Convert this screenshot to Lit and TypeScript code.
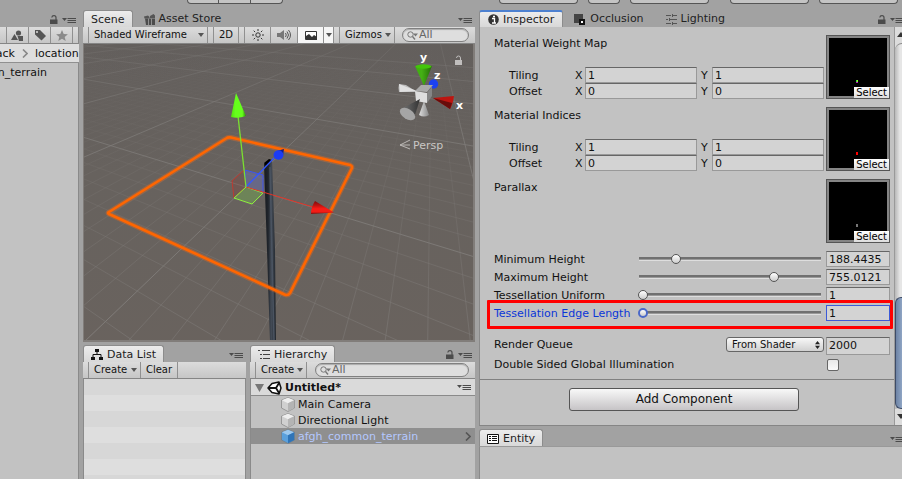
import { LitElement, html, svg, css, nothing } from "lit";
import { customElement, property } from "lit/decorators.js";

const caret = html`<svg class="caret" width="6" height="4" viewBox="0 0 6 4"><path d="M0 0h6L3 4z" fill="#555" /></svg>`;
const lockIcon = html`<svg width="8" height="9" viewBox="0 0 8 9"><path d="M0 4.500h7.500V9H0z" fill="#4b4b4b" /><path d="M1.800 2.500Q2 .6 4 .6 6 .6 6 2.600V5" fill="none" stroke="#4b4b4b" stroke-width="1.200" /></svg>`;
const menuIcon = html`<svg width="14" height="7" viewBox="0 0 14 7"><path d="M0 1h5L2.500 4z" fill="#4b4b4b" /><path d="M5.500 1.500H14M5.500 3.500H14M5.500 5.500H14" stroke="#4b4b4b" /></svg>`;
const magnifier = html`<svg width="11" height="9" viewBox="0 0 11 9"><circle cx="3.500" cy="3.500" r="2.700" fill="none" stroke="#777" /><path d="M5.500 5.500L8 8.500" stroke="#777" stroke-width="1.400" /><path d="M6 2.500h5L8.500 5.500z" fill="#777" /></svg>`;

const cube = (top: string, left: string, right: string) => html`<svg width="14" height="15" viewBox="0 0 14 15">
  <path d="M7 .5L13.500 3.200V11L7 14.500.5 11V3.200z" fill="${left}" stroke="#777" stroke-width=".6" />
  <path d="M7 .7L13.200 3.300 7 6.200.8 3.300z" fill="${top}" /><path d="M7 6.200L13.200 3.300V10.900L7 14.200z" fill="${right}" />
</svg>`;

/* Ground plane projected through two vanishing points. */
const ORIGIN = [246, 187];
const VP_X = [-349, 5];
const VP_Z = [432, 9];

function gridLine(k: number, step: number, along: number[], through: number[]) {
  const w = 1 + k * step;
  const px = (ORIGIN[0] + k * step * along[0]) / w;
  const py = (ORIGIN[1] + k * step * along[1]) / w;
  const x2 = through[0] + (px - through[0]) * 12;
  const y2 = through[1] + (py - through[1]) * 12;
  return svg`<line x1=${through[0]} y1=${through[1]} x2=${x2} y2=${y2} stroke=${k % 10 === 0 ? "url(#major)" : "url(#minor)"} />`;
}

const range = (from: number, to: number) => Array.from({ length: to - from + 1 }, (_, i) => from + i);

@customElement("scene-view")
export class SceneView extends LitElement {
  static styles = css`
    :host { display: block; flex: 1; min-height: 0; border: 2px solid #817d7a; border-width: 0 2px 2px 1px; box-sizing: border-box; overflow: hidden; }
    svg { display: block; width: 100%; height: 100%; }
    .axis { font: bold 11px "DejaVu Sans", sans-serif; fill: #fff; }
    .persp { font: 11px "DejaVu Sans", sans-serif; fill: #c9c7c5; }
  `;

  render() {
    return html`<svg viewBox="84 44 389 296" preserveAspectRatio="xMidYMid slice">
      <defs>
        <linearGradient id="bg" x1="0" y1="0" x2="0" y2="1">
          <stop offset="0" stop-color="#625e5c" /><stop offset=".35" stop-color="#67625e" /><stop offset="1" stop-color="#6b635e" />
        </linearGradient>
        <linearGradient id="minor" gradientUnits="userSpaceOnUse" x1="0" y1="44" x2="0" y2="340">
          <stop offset="0" stop-color="#777" stop-opacity="0" /><stop offset=".2" stop-color="#7c7875" stop-opacity=".08" /><stop offset=".5" stop-color="#7c7875" stop-opacity=".3" /><stop offset="1" stop-color="#7c7875" stop-opacity=".65" />
        </linearGradient>
        <linearGradient id="major" gradientUnits="userSpaceOnUse" x1="0" y1="44" x2="0" y2="340">
          <stop offset="0" stop-color="#7a7775" stop-opacity=".3" /><stop offset=".3" stop-color="#7d7a77" stop-opacity=".8" /><stop offset="1" stop-color="#807c79" />
        </linearGradient>
        <linearGradient id="pole" x1="0" y1="0" x2="1" y2="0">
          <stop offset="0" stop-color="#171a1f" /><stop offset=".35" stop-color="#20252c" /><stop offset=".6" stop-color="#444c57" /><stop offset="1" stop-color="#20252c" />
        </linearGradient>
        <linearGradient id="greenCone"><stop offset="0" stop-color="#3fb010" /><stop offset=".4" stop-color="#44b014" /><stop offset="1" stop-color="#256c08" /></linearGradient>
        <linearGradient id="limeCone"><stop offset="0" stop-color="#54e010" /><stop offset=".3" stop-color="#66ff1c" /><stop offset=".75" stop-color="#66ff1c" /><stop offset="1" stop-color="#2a8c08" /></linearGradient>
        <linearGradient id="redCone" x1="0" y1="0" x2="0" y2="1"><stop offset="0" stop-color="#7c0c0c" /><stop offset=".35" stop-color="#c01410" /><stop offset=".6" stop-color="#fa1c16" /><stop offset=".85" stop-color="#f01c16" /><stop offset="1" stop-color="#700c0a" /></linearGradient>
        <linearGradient id="darkCone"><stop offset="0" stop-color="#777" /><stop offset="1" stop-color="#333" /></linearGradient>
        <linearGradient id="lightCone"><stop offset="0" stop-color="#ddd" /><stop offset="1" stop-color="#888" /></linearGradient>
      </defs>
      <rect x="0" y="0" width="600" height="500" fill="url(#bg)" />
      <g>
        ${range(-30, 60).map((k) => gridLine(k, 0.0294, VP_X, VP_Z))}
        ${range(-13, 40).map((k) => gridLine(k, 0.0615, VP_Z, VP_X))}
      </g>
      <path d="M264 164L272 160 275 250 276 341H270L267 250z" fill="url(#pole)" />
      <path d="M264 163l5-4 3 1-6 6z" fill="#000" />
      <path d="M270 167L274 341" stroke="#4a5360" stroke-width="1.500" />
      <path d="M109 212L226 138.500Q228 137 231 137.500L350 165Q353 166 351.500 169L290 293Q288 296 284.500 294.500L109 214Q107 213 109 212z" fill="none" stroke="#ff6a10" stroke-opacity=".35" stroke-width="5" />
      <path d="M109 212L226 138.500Q228 137 231 137.500L350 165Q353 166 351.500 169L290 293Q288 296 284.500 294.500L109 214Q107 213 109 212z" fill="none" stroke="#ff6600" stroke-width="2.600" />
      <path d="M246 187L244 170 232 181 234 198z" fill="#8a3a35" fill-opacity=".25" stroke="#c03a30" />
      <path d="M246 187L245 170 263 175 263 193z" fill="#6a70b8" fill-opacity=".45" stroke="#3c55f0" />
      <path d="M246 187L263 193 252 204 234 198z" fill="#78b850" fill-opacity=".4" stroke="#8cf03c" />
      <path d="M246 187L274 158" stroke="#3456ff" stroke-width="1.300" />
      <path d="M246 187L313 207" stroke="#e03428" />
      <path d="M246 187L238 116" stroke="#7be030" stroke-width="1.300" />
      <path d="M236 93L231 117Q238 119 246 116z" fill="url(#limeCone)" />
      <path d="M334 212.500L315 201Q311 207 311 214z" fill="url(#redCone)" />
      <path d="M277 151l7-2-1 6z" fill="#101c88" /><ellipse cx="278.500" cy="155" rx="5" ry="4.700" fill="#1c3cf4" />
      <path d="M399 84Q398 88 399 92L417 92 406 85z" fill="#bbb" /><path d="M399 84L417 91 400 92z" fill="#e0e0e0" />
      <path d="M424 101L419 115Q424 118 429 115z" fill="url(#lightCone)" />
      <path d="M415 66L424 86 432 66z" fill="url(#greenCone)" /><ellipse cx="423.500" cy="66.500" rx="8" ry="2.200" fill="#43c50a" />
      <path d="M428 90l3-7 7 2z" fill="#122488" /><circle cx="433.500" cy="84" r="4.700" fill="#1b41f2" />
      <path d="M415 91L421 85H433L427 92z" fill="#aaa" /><path d="M415 91L427 93V103L416 101z" fill="#dedede" /><path d="M427 93L432 86V96L427 103z" fill="#858585" />
      <path d="M420 99L401 109Q405 117 414 118z" fill="url(#darkCone)" /><ellipse cx="407.500" cy="114" rx="8.500" ry="5" transform="rotate(32 407.500 114)" fill="#a5a5a5" />
      <path d="M433 98L454 96Q453 104 450 109z" fill="#bd1510" /><path d="M433 98L450 109 452 103z" fill="#680c0a" />
      <text class="axis" x="420" y="61">y</text><text class="axis" x="434" y="79">z</text><text class="axis" x="456" y="109">x</text>
      <path d="M455 60h7v5h-7z" fill="#c0bebd" /><path d="M456.500 58a2 2 0 0 1 4 0v2" fill="none" stroke="#c0bebd" />
      <path d="M410 140L400 145 410 149M400 145H410" fill="none" stroke="#bbb8b5" />
      <text class="persp" x="413" y="149">Persp</text>
    </svg>`;
  }
}

@customElement("texture-slot")
export class TextureSlot extends LitElement {
  @property() label = "";
  @property() dot = "";
  @property({ type: Boolean }) tiled = false;

  static styles = css`
    :host { display: grid; grid-template-columns: minmax(0, 1fr) 64px; gap: 2px; height: 64px; }
    .info { display: flex; flex-direction: column; justify-content: space-between; }
    .name { line-height: 18px; }
    .vectors { padding-left: 15px; }
    .vector { display: grid; grid-template-columns: 66px 10px minmax(0, 1fr) 15px minmax(0, 1fr); height: 16px; line-height: 18px; }
    .second { padding-left: 4px; }
    input { box-sizing: border-box; width: 100%; min-width: 0; height: 16px; margin: 0; padding: 1px 2px 0; font: inherit; line-height: 14px; color: #111; background: #d3d3d3; border: 1px solid #999; border-top-color: #666; border-radius: 0; outline: 0; }
    .thumb { display: flex; align-items: flex-end; justify-content: flex-end; box-sizing: border-box; border: 1px solid #555; background: #000; box-shadow: inset 0 0 0 2px #858585; position: relative; }
    .dot { position: absolute; left: 29px; bottom: 15px; width: 2px; height: 3px; }
    .green { background: linear-gradient(90deg, #30e040 50%, #a0f020 50%); border-bottom: 1px solid #b020c0; height: 2px; }
    .red { background: #f00; }
    .grey { background: #777; }
    button { font: 10px/11px "DejaVu Sans", sans-serif; height: 11px; margin: 0; padding: 0 2px; border: 0; color: #000; background: linear-gradient(#fff, #ddd); position: relative; }
  `;

  render() {
    const row = (name: string, v: string) => html`<div class="vector">
      <span>${name}</span><span>X</span><input aria-label="${this.label} ${name} X" .value=${v} />
      <span class="second">Y</span><input aria-label="${this.label} ${name} Y" .value=${v} />
    </div>`;
    return html`<div class="info">
        <div class="name">${this.label}</div>
        ${this.tiled ? html`<div class="vectors">${row("Tiling", "1")}${row("Offset", "0")}</div>` : nothing}
      </div>
      <div class="thumb"><span class="dot ${this.dot}"></span><button>Select</button></div>`;
  }
}

@customElement("app-root")
export class AppRoot extends LitElement {
  static styles = css`
    :host { display: flex; flex-direction: column; min-height: 100vh; overflow: hidden; background: #a2a2a2; color: #111; font: 11px/16px "DejaVu Sans", sans-serif; }
    * { box-sizing: border-box; }
    svg { display: block; flex: none; }
    button, input, select { font: inherit; color: inherit; margin: 0; outline: 0; }
    .top { display: flex; height: 10px; align-items: flex-start; }
    .tool { display: flex; height: 4px; width: 79px; padding: 0; border: 1px solid #555; border-top: 0; border-radius: 0 0 4px 4px; background: #c4c4c4; }
    .play { width: 32px; border-radius: 0; border-left-width: 0; }
    .play.first { border-radius: 0 0 0 4px; border-left-width: 1px; }
    .play.last { border-radius: 0 0 4px 0; }
    .transport { display: flex; margin-left: 187px; }
    .services { display: flex; gap: 10px; margin-left: 216px; }
    .tool.small { width: 32px; }
    .divider { width: 1px; }
    .layout { flex: 1; display: grid; grid-template-columns: 79px minmax(0, 392fr) minmax(0, 423fr); column-gap: 4px; }
    .col { display: flex; flex-direction: column; min-width: 0; }
    .tabs { display: flex; align-items: flex-end; height: 17px; flex: none; }
    .tab { display: flex; align-items: center; gap: 4px; height: 17px; padding: 1px 11px 0; border: 0; background: none; color: #222; line-height: 16px; white-space: nowrap; }
    .tab.on { background: linear-gradient(#ececec, #d8d8d8); border: 1px solid #8c8c8c; border-bottom: 0; border-radius: 3px 3px 0 0; padding: 1px 7px 0; }
    .tab.focus { border-top: 2px solid #4c80d0; padding: 0 8px; }
    .tools { display: flex; align-items: flex-end; gap: 4px; margin-left: auto; padding: 0 3px 3px 0; }
    .edge { margin-right: -5px; }
    .bar { display: flex; align-items: center; height: 17px; flex: none; background: linear-gradient(#dcdcdc, #c6c6c6); border-bottom: 1px solid #858585; font-size: 10px; line-height: 16px; }
    .cell { display: flex; align-items: center; justify-content: center; height: 16px; padding: 0; border: 0; border-left: 1px solid #909090; background: none; white-space: nowrap; }
    .cell.end { border-right: 1px solid #909090; }
    .cell.lit { background: #f6f6f6; }
    .cell.drop { justify-content: space-between; padding: 0 3px 0 5px; }
    .cell.wide { padding: 0 4px; }
    .search { display: flex; align-items: center; gap: 1px; height: 14px; padding: 0 4px; border: 1px solid #808080; border-radius: 7px; background: #dedede; box-shadow: inset 0 1px 1px #aaa; }
    .search input { width: 100%; min-width: 0; height: 12px; padding: 0; border: 0; background: none; color: #666; font-size: 11px; }
    .search input::placeholder { color: #666; opacity: 1; }
    .body { flex: 1; background: #c2c2c2; border-left: 1px solid #8a8a8a; }

    .project .body { border-left: 0; border-right: 1px solid #8a8a8a; }
    .icons { justify-content: flex-end; border-right: 1px solid #8a8a8a; }
    .icons .cell { width: 22px; }
    .icons .tail { width: 6px; }
    .crumbs { display: flex; align-items: center; gap: 7px; height: 19px; padding-top: 1px; background: #dedede; border-bottom: 1px solid #909090; overflow: hidden; }
    .clip { display: flex; justify-content: flex-end; overflow: hidden; white-space: nowrap; }
    .parent { width: 15px; }
    .file { width: 47px; padding-top: 2px; }

    .w-shade { width: 120px; margin-left: 5px; }
    .w-2d { width: 26px; margin-left: 5px; }
    .w-icon { width: 27px; }
    .w-fx { width: 26px; }
    .w-fxdrop { width: 11px; }
    .w-giz { width: 56px; margin-left: 5px; }
    .w-search { width: 67px; margin: 0 6px 0 auto; }
    .w-create { width: 52px; }
    .w-clear { width: 38px; }
    .lower { display: grid; grid-template-columns: minmax(0, 163fr) minmax(0, 225fr); column-gap: 4px; height: 134px; margin-top: 3px; }
    .stripes { background: repeating-linear-gradient(#d7d7d7 0 16px, #dedede 16px 32px); border-right: 1px solid #8a8a8a; }
    .w-pad { width: 5px; }
    .w-wide { flex: 1; margin: 0 6px 0 8px; }
    .tree { margin: 0; padding: 0; list-style: none; }
    .tree li { display: flex; align-items: center; gap: 3px; height: 16px; padding: 1px 4px 0 30px; }
    .tree .scene { height: 17px; background: #dadada; border-bottom: 1px solid #8a8a8a; font-weight: bold; padding-left: 4px; }
    .tree .sel { background: #8f8f8f; color: #b4c8ff; }
    .push { margin-left: auto; }

    .inspector { display: flex; flex: none; height: 399px; background: #c2c2c2; border-left: 1px solid #8a8a8a; border-bottom: 1px solid #858585; }
    .content { flex: 1; min-width: 0; padding: 8px 4px 0 14px; }
    .slots { display: grid; row-gap: 8px; }
    .sliders { display: grid; row-gap: 2px; padding-top: 8px; }
    .slide { position: relative; display: grid; grid-template-columns: 144px minmax(0, 1fr) 64px; column-gap: 4px; align-items: center; height: 16px; white-space: nowrap; }
    .slide label { height: 16px; line-height: 18px; }
    .slide > input[type="range"] { margin-left: -4px; }
    .field { width: 100%; min-width: 0; height: 16px; padding: 1px 2px 0; line-height: 14px; background: #d3d3d3; border: 1px solid #999; border-top-color: #666; border-radius: 0; }
    .hot { color: #0a36d8; }
    .hot .field { border: 1px solid #3c5ad8; color: #111; }
    .marker { position: absolute; inset: -5px -3px -8px -7px; border: 3px solid #f00; border-radius: 1px; pointer-events: none; }
    input[type="range"] { appearance: none; -webkit-appearance: none; height: 12px; width: calc(100% + 4px); background: linear-gradient(#707070 0 2px, #999 2px 3px, #dedede 3px 4px) center / calc(100% - 2px) 4px no-repeat; }
    input[type="range"]::-webkit-slider-thumb { appearance: none; -webkit-appearance: none; width: 10px; height: 10px; border: 1px solid #555; border-radius: 50%; background: linear-gradient(#fff, #ccc); }
    .hot input[type="range"]::-webkit-slider-thumb { border: 2px solid #4a68c8; }
    .queue { display: grid; grid-template-columns: minmax(0, 1fr) 98px 64px; column-gap: 2px; height: 18px; margin-top: 16px; align-items: start; }
    .queue .field { height: 18px; padding: 0 2px 1px; }
    .pick { position: relative; }
    select { appearance: none; -webkit-appearance: none; display: block; width: 100%; height: 15px; padding: 0 5px; border: 1px solid #666; border-radius: 3px; background: linear-gradient(#f8f8f8, #d0d0d0); font-size: 10px; line-height: 13px; }
    .pick svg { position: absolute; right: 4px; top: 4px; pointer-events: none; }
    .double { display: flex; justify-content: space-between; align-items: center; height: 16px; margin-top: 2px; padding-right: 51px; }
    input[type="checkbox"] { appearance: none; -webkit-appearance: none; width: 12px; height: 12px; border: 1px solid #666; border-radius: 2px; background: linear-gradient(#e8e8e8, #fafafa); }
    .rule { height: 1px; margin: 6px -4px 8px -14px; background: #808080; }
    .add { display: block; width: 230px; height: 23px; margin: 0 auto; border: 1px solid #555; border-radius: 3px; background: linear-gradient(#f8f8f8, #c6c4c6); font-size: 12px; padding: 0 0 2px; }
    .addrow { padding-right: 16px; }
    .scroll { display: flex; flex-direction: column; width: 8px; border-left: 1px solid #999; background: #dcdcdc; overflow: hidden; }
    .scroll .arrow { height: 16px; padding: 5px 0 0 2px; }
    .groove { flex: 1; display: flex; align-items: flex-end; background: linear-gradient(90deg, #b8b8b8, #e6e6e6 5px); border-top: 1px solid #888; border-radius: 8px 0 0 0; }
    .grip { width: 7px; height: 112px; border: 1px solid #3d4b66; border-right: 0; border-radius: 6px 0 0 6px; background: linear-gradient(90deg, #6d83a5, #8fa5c4); }
    .entity { margin-top: 3px; }
    .entitybody { border-top: 1px solid #999; }
  `;

  private slide(id: string, label: string, value: string, pos: number, hot = false) {
    return html`<div class="slide ${hot ? "hot" : ""}">
      <label for=${id}>${label}</label>
      <input type="range" id=${id} min="0" max="1000" step="0.0001" .value=${String(pos)} />
      <input class="field" aria-label="${label} value" .value=${value} />
      ${hot ? html`<span class="marker"></span>` : nothing}
    </div>`;
  }

  render() {
    return html`
      <header class="top">
        <div class="transport">
          <button class="tool play first" aria-label="Play"></button><button class="tool play" aria-label="Pause"></button><button class="tool play last" aria-label="Step"></button>
        </div>
        <div class="services">
          <button class="tool" aria-label="Collab"></button><button class="tool small" aria-label="Cloud"></button><button class="tool" aria-label="Account"></button>
          <span class="divider"></span><button class="tool" aria-label="Layers"></button><button class="tool" aria-label="Layout"></button>
        </div>
      </header>
      <main class="layout">
        <section class="col project">
          <div class="tabs"><div class="tools">${lockIcon}${menuIcon}</div></div>
          <div class="bar icons">
            <button class="cell" aria-label="Filter by type"><svg width="13" height="11" viewBox="0 0 13 11"><path d="M3.500 4L7 10H0z" fill="#555" /><circle cx="7.500" cy="3" r="2.600" fill="#555" /><path d="M6.500 6H12v5H8z" fill="#555" /></svg></button>
            <button class="cell" aria-label="Filter by label"><svg width="12" height="12" viewBox="0 0 12 12"><path d="M1 1h5l6 6-4.500 4.500L1 5.500z" fill="#555" /><circle cx="3" cy="3" r="1" fill="#ddd" /></svg></button>
            <button class="cell" aria-label="Favourites"><svg width="12" height="11" viewBox="0 0 12 11"><path d="M6 0l1.700 3.900 4.200.3-3.200 2.700 1 4.100L6 8.800 2.300 11l1-4.100L.1 4.200l4.200-.3z" fill="#8a8a8a" /></svg></button>
            <span class="cell tail"></span>
          </div>
          <div class="crumbs"><span class="clip parent">ack</span><svg width="6" height="9" viewBox="0 0 6 9"><path d="M1 .5l4 4-4 4" fill="none" stroke="#888" stroke-width="1.600" /></svg><span>location</span></div>
          <div class="body"><div class="clip file">n_terrain</div></div>
        </section>

        <section class="col">
          <div class="tabs">
            <button class="tab on">Scene</button>
            <button class="tab"><svg width="11" height="11" viewBox="0 0 11 11"><path d="M1 4.500h10V11H2z" fill="#4c4c4c" /><path d="M0 2.500l4-1 1.500 1.500V4.500H.5zM6 2l3.500-2L11 1.500V4H6z" fill="#555" /><path d="M4.500 4.500V11M7.500 4.500V11" stroke="#909090" /></svg>Asset Store</button>
            <div class="tools">${menuIcon}</div>
          </div>
          <div class="bar">
            <button class="cell end drop w-shade">Shaded Wireframe${caret}</button>
            <button class="cell end w-2d">2D</button>
            <button class="cell w-2d" aria-label="Lighting"><svg width="12" height="12" viewBox="0 0 12 12"><circle cx="6" cy="6" r="2.200" fill="none" stroke="#333" /><path d="M6 0v2M6 10v2M0 6h2M10 6h2M1.700 1.700l1.400 1.400M8.900 8.900l1.400 1.400M10.300 1.700L8.900 3.100M3.100 8.900l-1.400 1.400" stroke="#333" /></svg></button>
            <button class="cell w-icon" aria-label="Audio"><svg width="14" height="12" viewBox="0 0 14 12"><path d="M0 4h3l4-3v10L3 8H0z" fill="#777" /><path d="M8.500 4q1.500 2 0 4M10 2.500q3 3.500 0 7M11.500 1q4 5 0 10" fill="none" stroke="#555" /></svg></button>
            <button class="cell lit w-fx" aria-label="Effects"><svg width="12" height="9" viewBox="0 0 12 9"><path d="M.5.5h11v8H.5z" fill="#fff" stroke="#333" /><path d="M1 5l3-2 3 3 2-2 3 2v3H1z" fill="#333" /></svg></button>
            <button class="cell lit end w-fxdrop" aria-label="Effects menu">${caret}</button>
            <button class="cell end drop w-giz">Gizmos${caret}</button>
            <label class="search w-search">${magnifier}<input aria-label="Search scene" placeholder="All" /></label>
          </div>
          <scene-view></scene-view>
          <div class="lower">
            <section class="col">
              <div class="tabs">
                <button class="tab on"><svg width="12" height="11" viewBox="0 0 12 11"><path d="M4 0h4v3H4zM0 8h4v3H0zM8 8h4v3H8z" fill="#111" /><path d="M6 3v3M2 8V5.500h8V8" fill="none" stroke="#111" /></svg>Data List</button>
                <div class="tools">${menuIcon}</div>
              </div>
              <div class="bar"><span class="w-pad"></span><button class="cell drop w-create">Create${caret}</button><button class="cell end w-clear">Clear</button></div>
              <div class="body stripes"></div>
            </section>
            <section class="col">
              <div class="tabs">
                <button class="tab on"><svg width="12" height="9" viewBox="0 0 12 9"><path d="M0 .5h2M4 .5h8M2 4.500h2M5 4.500h7M2 8.500h2M5 8.500h7" stroke="#444" /></svg>Hierarchy</button>
                <div class="tools">${lockIcon}${menuIcon}</div>
              </div>
              <div class="bar"><span class="w-pad"></span><button class="cell end drop w-create">Create${caret}</button><label class="search w-wide">${magnifier}<input aria-label="Search hierarchy" placeholder="All" /></label></div>
              <div class="body">
                <ul class="tree">
                  <li class="scene"><svg width="9" height="8" viewBox="0 0 9 8"><path d="M0 0h9L4.500 8z" fill="#777" /></svg><svg width="15" height="14" viewBox="0 0 15 14"><path d="M1 7L5 2.500 12 1l2 6-2 6-7-1.500z" fill="#fff" stroke="#111" stroke-width="1.500" stroke-linejoin="round" /><path d="M2 7h7M9 7l3-5M9 7l3 5" stroke="#111" stroke-width="1.800" /></svg><span>Untitled*</span><span class="push">${menuIcon}</span></li>
                  <li>${cube("#eee", "#d0d0d0", "#b4b4b4")}Main Camera</li>
                  <li>${cube("#eee", "#d0d0d0", "#b4b4b4")}Directional Light</li>
                  <li class="sel">${cube("#9cc8ee", "#5aa0dc", "#2f74b8")}afgh_common_terrain<svg class="push" width="6" height="9" viewBox="0 0 6 9"><path d="M1 .5l4 4-4 4" fill="none" stroke="#555" stroke-width="1.600" /></svg></li>
                </ul>
              </div>
            </section>
          </div>
        </section>

        <section class="col">
          <div class="tabs">
            <button class="tab on focus"><svg width="11" height="11" viewBox="0 0 11 11"><circle cx="5.500" cy="5.500" r="5.300" fill="#333" /><path d="M4 4.500h2.500V9M4 9h4M5 2.500h2" stroke="#fff" stroke-width="1.300" fill="none" /></svg>Inspector</button>
            <button class="tab"><svg width="12" height="11" viewBox="0 0 12 11"><path d="M0 0h9v9H0z" fill="#444" /><path d="M5 5h6v6H5z" fill="#111" /><path d="M7 7h2v2H7z" fill="#fff" /></svg>Occlusion</button>
            <button class="tab"><svg width="11" height="11" viewBox="0 0 11 11"><path d="M0 1.500h5M7 1.500h4M6.500 0v3M0 5.500h2M4 5.500h7M3.500 4v3M0 9.500h5M7 9.500h4M6.500 8v3" stroke="#555" /></svg>Lighting</button>
            <div class="tools edge">${lockIcon}${menuIcon}</div>
          </div>
          <div class="inspector">
            <div class="content">
              <div class="slots">
                <texture-slot label="Material Weight Map" dot="green" tiled></texture-slot>
                <texture-slot label="Material Indices" dot="red" tiled></texture-slot>
                <texture-slot label="Parallax" dot="grey"></texture-slot>
              </div>
              <div class="sliders">
                ${this.slide("min", "Minimum Height", "188.4435", 188.4435)}
                ${this.slide("max", "Maximum Height", "755.0121", 755.0121)}
                ${this.slide("uni", "Tessellation Uniform", "1", 1)}
                ${this.slide("edge", "Tessellation Edge Length", "1", 1, true)}
              </div>
              <div class="queue">
                <label for="queue">Render Queue</label>
                <span class="pick"><select aria-label="Render queue source"><option>From Shader</option></select><svg width="5" height="8" viewBox="0 0 5 8"><path d="M0 3.300L2.500 0 5 3.300zM0 4.700h5L2.500 8z" fill="#222" /></svg></span>
                <input class="field" id="queue" .value=${"2000"} />
              </div>
              <div class="double"><label for="gi">Double Sided Global Illumination</label><input type="checkbox" id="gi" /></div>
              <div class="rule"></div>
              <div class="addrow"><button class="add">Add Component</button></div>
            </div>
            <div class="scroll">
              <div class="arrow"><svg width="8" height="5" viewBox="0 0 8 5"><path d="M0 5L4 0 8 5z" fill="#333" /></svg></div>
              <div class="groove"><div class="grip"></div></div>
              <div class="arrow"><svg width="8" height="5" viewBox="0 0 8 5"><path d="M0 0h8L4 5z" fill="#333" /></svg></div>
            </div>
          </div>
          <div class="tabs entity">
            <button class="tab on"><svg width="12" height="10" viewBox="0 0 12 10"><path d="M.5.5h11v9H.5z" fill="#fff" stroke="#111" /><path d="M2 2.500h2M5 2.500h5M2 4.500h2M5 4.500h5M2 6.500h2M5 6.500h5" stroke="#111" /></svg>Entity</button>
            <div class="tools edge">${menuIcon}</div>
          </div>
          <div class="body entitybody"></div>
        </section>
      </main>
    `;
  }
}
